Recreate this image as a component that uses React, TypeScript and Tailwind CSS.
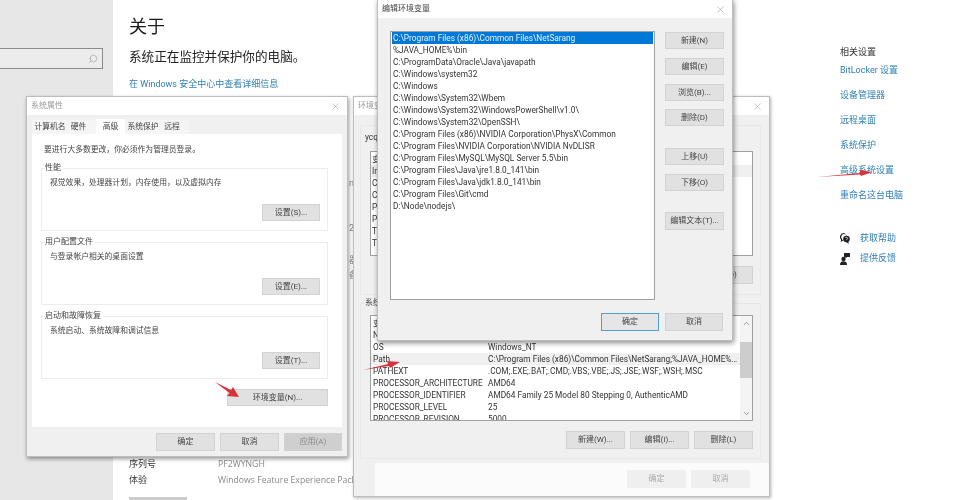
import { Search, X, ChevronUp, ChevronDown } from "lucide-react";

const FONT = "font-['Roboto','Noto_Sans_CJK_SC',sans-serif]";

function Btn({ label, className = "" }: { label: string; className?: string }) {
  return (
    <div className={`flex h-[17px] w-[59px] shrink-0 items-center justify-center border border-[#d2d2d2] bg-[#e1e1e1] text-[8px] text-[#444] ${className}`}>
      {label}
    </div>
  );
}

function TitleBar({ title, dark }: { title: string; dark?: boolean }) {
  return (
    <div className="flex h-[18px] shrink-0 items-center justify-between bg-white pl-[4px] pr-[6px]">
      <span className={`text-[8px] ${dark ? "text-[#444]" : "text-[#999]"}`}>{title}</span>
      <X size={11} strokeWidth={1} className="text-[#888]" />
    </div>
  );
}

function Group({ legend, text, button }: { legend: string; text: string; button: string }) {
  return (
    <fieldset className="h-[68px] w-[287px] min-w-0 border border-[#ececec] pl-[8px] pr-[7px]">
      <legend className="-ml-[5px] bg-white pr-[2px] text-[8px] leading-[10px] text-[#444]">{legend}</legend>
      <div className="mt-[4px] text-[7.8px] leading-[12px] text-[#444]">{text}</div>
      <Btn label={button} className="ml-auto mt-[15px] !w-[58px]" />
    </fieldset>
  );
}

function SystemProps() {
  const tabs = [
    ["计算机名", "w-[36px]", false],
    ["硬件", "w-[21px] mr-[7px]", false],
    ["高级", "w-[29px]", true],
    ["系统保护", "w-[36px]", false],
    ["远程", "w-[22px]", false],
  ] as const;
  return (
    <div className="absolute left-[26px] top-[96px] flex h-[361px] w-[322px] flex-col border border-[#bdbdbd] bg-[#f0f0f0] shadow-[1px_2px_4px_rgba(0,0,0,0.4)]">
      <TitleBar title="系统属性" />
      <div className="ml-[5px] mt-[5px] flex h-[14px] w-[157px] bg-[#f5f5f5]">
        {tabs.map(([t, w, on]) => (
          <div key={t} className={`flex items-center justify-center text-[7.8px] text-[#444] ${w} ${on ? "-mt-[1px] bg-white" : ""}`}>{t}</div>
        ))}
      </div>
      <div className="mx-[5px] h-[293px] w-[310px] bg-white pl-[9px] pr-[14px]">
        <div className="pb-[7px] pl-[3px] pt-[10px] text-[7.8px] leading-[12px] text-[#444]">要进行大多数更改，你必须作为管理员登录。</div>
        <div className="flex flex-col gap-[6px]">
          <Group legend="性能" text="视觉效果，处理器计划，内存使用，以及虚拟内存" button="设置(S)..." />
          <Group legend="用户配置文件" text="与登录帐户相关的桌面设置" button="设置(E)..." />
          <Group legend="启动和故障恢复" text="系统启动、系统故障和调试信息" button="设置(T)..." />
        </div>
        <Btn label="环境变量(N)..." className="ml-auto mt-[10px] !w-[101px]" />
      </div>
      <div className="mr-[5px] mt-[6px] flex justify-end gap-[5px]">
        <Btn label="确定" className="!h-[18px]" />
        <Btn label="取消" className="!h-[18px]" />
        <Btn label="应用(A)" className="!h-[18px] !w-[58px] !bg-[#cfcfcf] !text-[#888]" />
      </div>
    </div>
  );
}

function SysRow({ name, value, on }: { name: string; value: string; on?: boolean }) {
  return (
    <div className={`flex h-[12px] shrink-0 items-center text-[8.3px] leading-[12px] text-[#333] ${on ? "bg-[#f0f0f0]" : ""}`}>
      <span className="w-[117px] shrink-0 whitespace-nowrap pl-[2px]">{name}</span>
      <span className="min-w-0 truncate">{value}</span>
    </div>
  );
}

function EnvWindow() {
  const users = ["变量", "IntelliJ IDEA", "ChocolateyInstall", "CLASSPATH", "Path", "PyCharm", "TEMP", "TMP"];
  return (
    <div className="absolute left-[353px] top-[96px] flex h-[401px] w-[417px] flex-col border border-[#bdbdbd] bg-[#f0f0f0] shadow-[1px_1px_3px_rgba(0,0,0,0.3)]">
      <TitleBar title="环境变量" />
      <div className="ml-[6px] mr-[8px] mt-[10px] h-[170px] border border-[#e8e8e8] pl-[9px] pr-[7px] pt-[5px]">
        <div className="-ml-[5px] text-[8.3px] leading-[12px] text-[#333]">ycq 的用户变量(U)</div>
        <div className="mt-[8px] h-[105px] overflow-hidden border border-[#a0a0a0] bg-white pt-[1px]">
          {users.map((u, i) => (
            <div key={u} className={`h-[12px] pl-[1px] text-[8.3px] leading-[12px] text-[#333] ${i === 1 ? "bg-[#f0f0f0]" : ""}`}>{u}</div>
          ))}
        </div>
        <div className="mt-[10px] flex justify-end gap-[5px]">
          <Btn label="新建(N)..." className="!h-[18px]" />
          <Btn label="编辑(E)..." className="!h-[18px]" />
          <Btn label="删除(D)" className="!h-[18px]" />
        </div>
      </div>
      <fieldset className="ml-[6px] mr-[8px] mt-[3px] h-[161px] min-w-0 border border-[#e8e8e8] pl-[9px] pr-[7px]">
        <legend className="-ml-[5px] text-[8px] leading-[10px] text-[#444]">系统变量(S)</legend>
        <div className="mt-[7px] flex h-[106px] overflow-hidden border border-[#a0a0a0] bg-white">
          <div className="flex min-w-0 flex-1 flex-col overflow-hidden pt-[1px]">
            <SysRow name="变量" value="值" />
            <SysRow name="NUMBER_OF_PROCESSORS" value="16" />
            <SysRow name="OS" value="Windows_NT" />
            <SysRow on name="Path" value="C:\Program Files (x86)\Common Files\NetSarang;%JAVA_HOME%\..." />
            <SysRow name="PATHEXT" value=".COM;.EXE;.BAT;.CMD;.VBS;.VBE;.JS;.JSE;.WSF;.WSH;.MSC" />
            <SysRow name="PROCESSOR_ARCHITECTURE" value="AMD64" />
            <SysRow name="PROCESSOR_IDENTIFIER" value="AMD64 Family 25 Model 80 Stepping 0, AuthenticAMD" />
            <SysRow name="PROCESSOR_LEVEL" value="25" />
            <SysRow name="PROCESSOR_REVISION" value="5000" />
          </div>
          <div className="flex w-[12px] shrink-0 flex-col items-center bg-[#f4f4f4]">
            <ChevronUp size={9} strokeWidth={1.5} className="mt-[3px] text-[#555]" />
            <div className="mt-[14px] h-[36px] w-full bg-[#cdcdcd]" />
            <ChevronDown size={9} strokeWidth={1.5} className="mt-auto mb-[2px] text-[#555]" />
          </div>
        </div>
        <div className="mt-[10px] flex justify-end gap-[5px]">
          <Btn label="新建(W)..." className="!h-[18px]" />
          <Btn label="编辑(I)..." className="!h-[18px]" />
          <Btn label="删除(L)" className="!h-[18px]" />
        </div>
      </fieldset>
      <div className="ml-[21px] mt-[4px] flex flex-1 items-start justify-end gap-[5px] bg-[#fbfbfb] pr-[19px] pt-[7px]">
        <Btn label="确定" className="!h-[18px] !border-[#efefef] !bg-[#efefef] !text-[#aaa]" />
        <Btn label="取消" className="!h-[18px] !border-[#efefef] !bg-[#efefef] !text-[#aaa]" />
      </div>
    </div>
  );
}

function EditWindow() {
  const paths = [
    "C:\\Program Files (x86)\\Common Files\\NetSarang",
    "%JAVA_HOME%\\bin",
    "C:\\ProgramData\\Oracle\\Java\\javapath",
    "C:\\Windows\\system32",
    "C:\\Windows",
    "C:\\Windows\\System32\\Wbem",
    "C:\\Windows\\System32\\WindowsPowerShell\\v1.0\\",
    "C:\\Windows\\System32\\OpenSSH\\",
    "C:\\Program Files (x86)\\NVIDIA Corporation\\PhysX\\Common",
    "C:\\Program Files\\NVIDIA Corporation\\NVIDIA NvDLISR",
    "C:\\Program Files\\MySQL\\MySQL Server 5.5\\bin",
    "C:\\Program Files\\Java\\jre1.8.0_141\\bin",
    "C:\\Program Files\\Java\\jdk1.8.0_141\\bin",
    "C:\\Program Files\\Git\\cmd",
    "D:\\Node\\nodejs\\",
  ];
  return (
    <div className="absolute left-[377px] top-[-1px] flex h-[342px] w-[356px] flex-col border border-[#bdbdbd] bg-[#f0f0f0] shadow-[1px_2px_5px_rgba(0,0,0,0.45)]">
      <TitleBar title="编辑环境变量" dark />
      <div className="flex pl-[12px] pt-[13px]">
        <div className="h-[269px] w-[265px] border border-[#a0a0a0] bg-white px-[1px]">
          {paths.map((p, i) => (
            <div key={p} className={`h-[12px] whitespace-nowrap pl-[1px] text-[8.3px] leading-[13px] ${i === 0 ? "bg-[#0078d7] text-[#e8f2fa]" : "text-[#333]"}`}>{p}</div>
          ))}
        </div>
        <div className="ml-[10px] flex flex-col pt-[1px]">
          <Btn label="新建(N)" />
          <Btn label="编辑(E)" className="mt-[9px]" />
          <Btn label="浏览(B)..." className="mt-[9px]" />
          <Btn label="删除(D)" className="mt-[8px]" />
          <Btn label="上移(U)" className="mt-[22px]" />
          <Btn label="下移(O)" className="mt-[9px]" />
          <Btn label="编辑文本(T)..." className="mt-[21px] !h-[18px]" />
        </div>
      </div>
      <div className="mt-[13px] flex justify-end gap-[6px] pr-[9px]">
        <Btn label="确定" className="!h-[18px] !w-[58px] !border-[#4f9ed6] !bg-[#e6e6e6]" />
        <Btn label="取消" className="!h-[18px] !w-[58px]" />
      </div>
    </div>
  );
}

export default function App() {
  const links = ["BitLocker 设置", "设备管理器", "远程桌面", "系统保护", "高级系统设置", "重命名这台电脑"];
  return (
    <div className={`relative flex h-[500px] w-[980px] overflow-hidden bg-white ${FONT} blur-[0.35px]`}>
      <aside className="h-full w-[113px] shrink-0 bg-[#e7e7e7] pt-[48px]">
        <div className="flex h-[21px] w-[103px] items-center justify-end border border-l-0 border-[#8a8a8a] bg-[#ececec] pr-[4px]">
          <Search size={10} strokeWidth={1} className="-scale-x-100 text-[#777]" />
        </div>
      </aside>
      <main className="flex flex-1">
        <section className="w-[727px] shrink-0 pl-[16px] pt-[13px]">
          <h1 className="text-[18px] font-normal leading-[28px] text-[#1a1a1a]">关于</h1>
          <p className="mt-[6px] text-[12.6px] leading-[20px] text-[#222]">系统正在监控并保护你的电脑。</p>
          <p className="mt-[10px] text-[9px] leading-[14px] text-[#2f7fb5]">在 Windows 安全中心中查看详细信息</p>
          <div className="ml-[220px] text-[9px] leading-[12px] text-[#888]">
            <div className="mt-[86px]">n</div>
            <div className="mt-[33px]">2(</div>
            <div className="mt-[20px]">器</div>
            <div className="mt-[3px]">备</div>
          </div>
          <div className="mt-[176px] flex h-[16px] items-center text-[9px] text-[#333]">
            <span className="w-[89px]">序列号</span>
            <span className="font-['Open_Sans'] text-[8.7px] text-[#888]">PF2WYNGH</span>
          </div>
          <div className="flex h-[16px] items-center text-[9px] text-[#333]">
            <span className="w-[89px]">体验</span>
            <span className="font-['Open_Sans'] text-[8.7px] text-[#888]">Windows Feature Experience Pack</span>
          </div>
          <div className="mt-[8px] h-[12px] w-[58px] bg-[#cccccc]" />
        </section>
        <section className="pt-[46px] text-[9px]">
          <div className="leading-[13px] text-[#333]">相关设置</div>
          <div className="mt-[5px] flex flex-col gap-[12px]">
            {links.map((l) => (
              <div key={l} className="h-[13px] leading-[13px] text-[#2f7fb5]">{l}</div>
            ))}
          </div>
          <div className="mt-[30px] flex h-[13px] items-center gap-[10px] text-[#2f7fb5]">
            <svg width="10" height="11" viewBox="0 0 10 11" fill="#222">
              <path d="M4 0a4 4 0 0 0-3 6.600L1 9l2-1.500A4 4 0 0 0 4 0zm0 1a3 3 0 0 1 1 5.800L3 6.500 2 7V6A3 3 0 0 1 4 1z" />
              <circle cx="6.500" cy="6" r="3.300" />
              <path d="M8 8.500 9 11 6 9z" />
              <path d="M5.500 5a1 1 0 1 1 1.300 1.200v.8" fill="none" stroke="#fff" strokeWidth="0.7" />
            </svg>
            <span>获取帮助</span>
          </div>
          <div className="mt-[7px] flex h-[13px] items-center gap-[10px] text-[#2f7fb5]">
            <svg width="10" height="12" viewBox="0 0 10 12" fill="#222">
              <circle cx="3.500" cy="6" r="2.200" />
              <path d="M0 12c0-3 1.500-3.800 3.500-3.800S7 9 7 12z" />
              <path d="M4 0h6v4H7L5.500 5.500V4H4z" />
            </svg>
            <span>提供反馈</span>
          </div>
        </section>
      </main>

      <SystemProps />
      <EnvWindow />
      <EditWindow />

      <svg className="absolute left-[213px] top-[380px] h-[20px] w-[28px]" viewBox="0 0 28 20" fill="#d6333b">
        <polygon points="2,2 18,10 20,7 26,17 14,16 16.500,13" />
      </svg>
      <svg className="absolute left-[362px] top-[358px] h-[14px] w-[40px]" viewBox="0 0 40 14" fill="#d6333b">
        <polygon points="1,12 26,6 25,3 38,4 28,10 27,8" />
      </svg>
      <svg className="absolute left-[816px] top-[168px] h-[11px] w-[58px]" viewBox="0 0 58 11" fill="#d6333b">
        <polygon points="1,9 44,5 44,2 56,4 45,8 44,6.500" />
      </svg>
    </div>
  );
}
